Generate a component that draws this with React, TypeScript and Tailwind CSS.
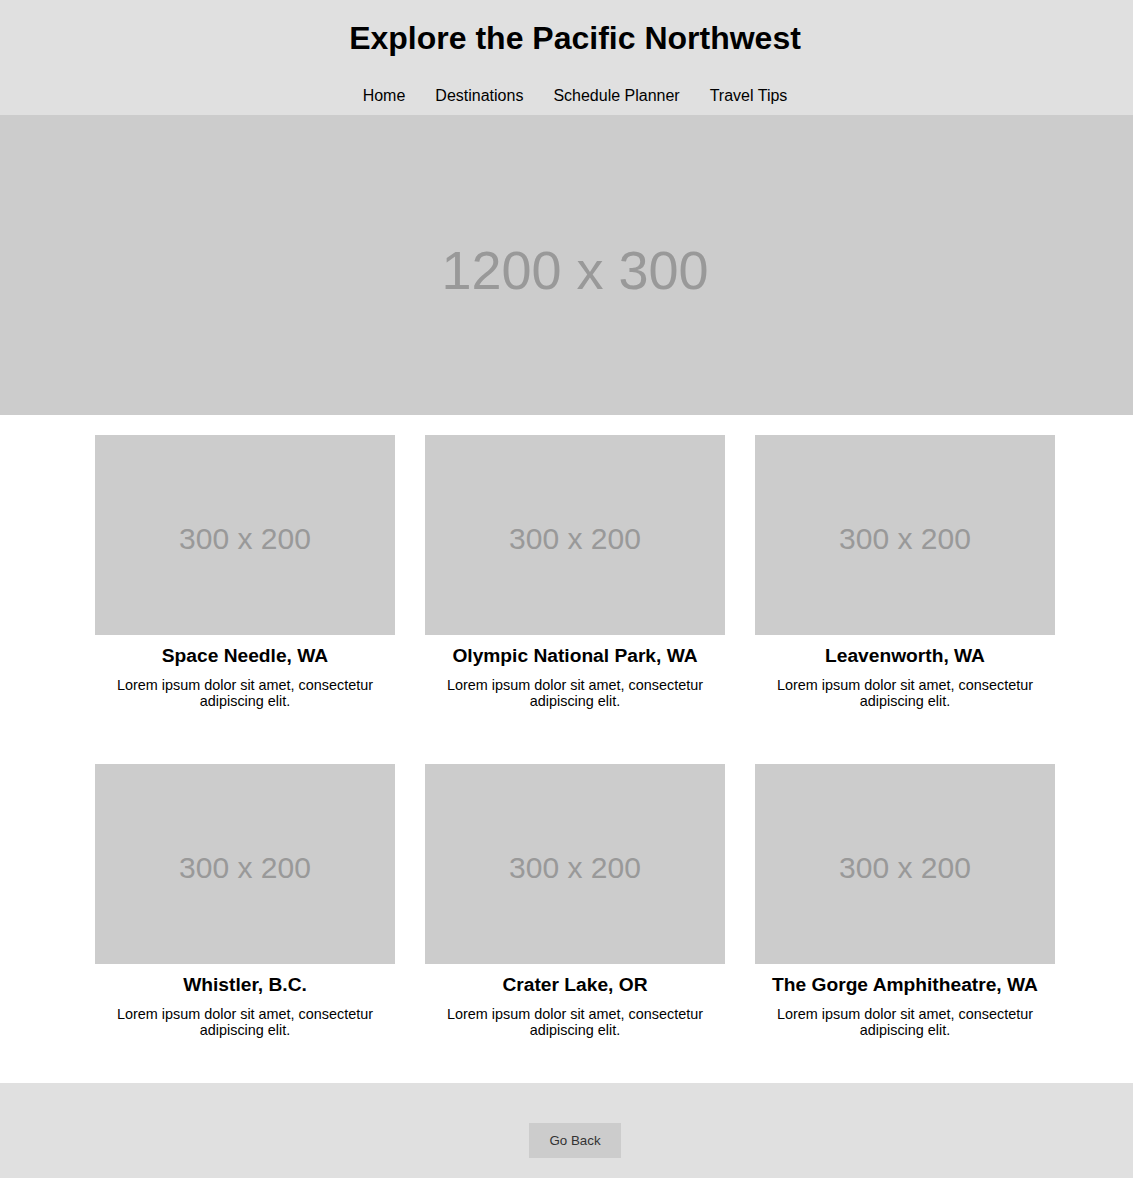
import React from 'react';

const destinations = [
  'Space Needle, WA',
  'Olympic National Park, WA',
  'Leavenworth, WA',
  'Whistler, B.C.',
  'Crater Lake, OR',
  'The Gorge Amphitheatre, WA',
];

const App: React.FC = () => {
  return (
    <div className="w-full overflow-hidden bg-white font-['Liberation_Sans',Arial,sans-serif] text-black">
      <div className="w-[1150px]">
        <header className="bg-[#e0e0e0] pt-[20px] pb-[10px] text-center">
          <h1 className="text-[32px] font-bold leading-[37px]">Explore the Pacific Northwest</h1>
          <nav className="mt-[30px] flex justify-center gap-[30px] text-[16px] leading-[18px]">
            <a href="#">Home</a>
            <a href="#">Destinations</a>
            <a href="#">Schedule Planner</a>
            <a href="#">Travel Tips</a>
          </nav>
        </header>

        <section className="flex h-[300px] items-center justify-center bg-[#cccccc] pt-[10px] text-[54px] text-[#999999]">
          1200 x 300
        </section>

        <main className="mx-auto grid w-[960px] grid-cols-3 gap-x-[30px] gap-y-[55px] pt-[20px] pb-[45px]">
          {destinations.map((name) => (
            <div key={name} className="text-center">
              <div className="flex h-[200px] w-[300px] items-center justify-center bg-[#cccccc] pt-[7px] text-[30px] text-[#999999]">
                300 x 200
              </div>
              <h3 className="mt-[10px] text-[19.2px] font-bold leading-[22px]">{name}</h3>
              <p className="mt-[10px] px-[5px] text-[14.4px] leading-[16px]">
                Lorem ipsum dolor sit amet, consectetur adipiscing elit.
              </p>
            </div>
          ))}
        </main>

        <footer className="flex justify-center bg-[#e0e0e0] pt-[40px] pb-[40px]">
          <button className="bg-[#cccccc] px-[20px] py-[10px] text-[13.333px] leading-[15px] text-[#333333]">
            Go Back
          </button>
        </footer>
      </div>
    </div>
  );
};

export default App;
